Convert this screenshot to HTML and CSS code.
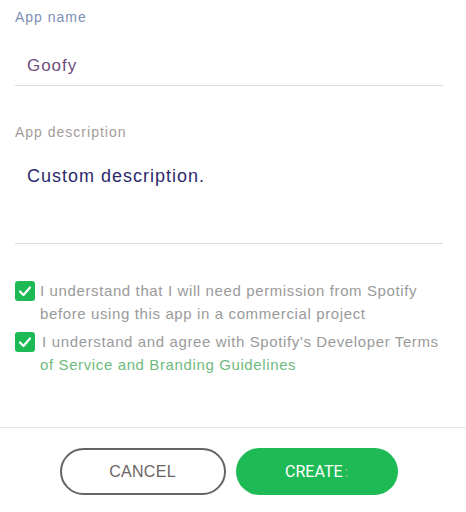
FILE: index.html
```html
<!DOCTYPE html>
<html>
<head>
<meta charset="utf-8">
<link rel="stylesheet" href="styles.css">
</head>
<body>
<div class="form">
  <div class="field">
    <div class="label label-name">App name</div>
    <div class="input">Goofy</div>
  </div>
  <div class="field field-desc">
    <div class="label label-desc">App description</div>
    <div class="input textarea">Custom description.</div>
  </div>
  <div class="checks">
    <div class="check">
      <span class="box"><svg width="20" height="20" viewBox="0 0 20 20"><path d="M5 10.5 L8.5 14 L15 6.5" fill="none" stroke="#fff" stroke-width="2.2" stroke-linecap="round" stroke-linejoin="round"/></svg></span>
      <span class="text">I understand that I will need permission from Spotify before using this app in a commercial project</span>
    </div>
    <div class="check">
      <span class="box"><svg width="20" height="20" viewBox="0 0 20 20"><path d="M5 10.5 L8.5 14 L15 6.5" fill="none" stroke="#fff" stroke-width="2.2" stroke-linecap="round" stroke-linejoin="round"/></svg></span>
      <span class="text"><span class="lead">I</span>understand and agree with Spotify's Developer Terms <span class="link">of Service and Branding Guidelines</span></span>
    </div>
  </div>
</div>
<div class="footer">
  <button class="btn cancel">CANCEL</button>
  <button class="btn create">CREATE<span class="caret">:</span></button>
</div>
</body>
</html>
```
FILE: styles.css
```css
html, body {
  margin: 0;
  padding: 0;
  background: #fff;
  font-family: "Liberation Sans", Arial, sans-serif;
}
.form {
  width: 428px;
  margin-left: 15px;
  padding-top: 8px;
}
.label {
  font-size: 14px;
  line-height: 18px;
  letter-spacing: 1px;
}
.label-name { color: #7d8fb6; }
.label-desc { color: #a59c98; }
.input {
  margin-top: 30px;
  padding-left: 12px;
  padding-bottom: 9px;
  font-size: 17px;
  line-height: 20px;
  letter-spacing: 0.95px;
  color: #6d4c7c;
  border-bottom: 1px solid #dcdcdc;
}
.field-desc {
  margin-top: 37px;
}
.textarea {
  margin-top: 25px;
  font-size: 18px;
  letter-spacing: 1px;
  color: #2b2a6c;
  padding-bottom: 57px;
}
.checks {
  margin-top: 35px;
  display: flex;
  flex-direction: column;
  gap: 5px;
}
.check {
  display: flex;
  align-items: flex-start;
  gap: 5px;
}
.box {
  flex: none;
  width: 20px;
  height: 20px;
  margin-top: 2px;
  border-radius: 3px;
  background: #1db954;
  display: flex;
}
.text {
  font-size: 15px;
  line-height: 23px;
  letter-spacing: 0.62px;
  color: #9a9a9a;
}
.lead {
  margin-left: 2px;
  margin-right: 5px;
}
.link {
  color: #6ebb7d;
}
.footer {
  margin-top: 51px;
  border-top: 1px solid #e6e6e6;
  padding-top: 20px;
  display: flex;
  justify-content: center;
  gap: 10px;
  padding-right: 9px;
}
.btn {
  height: 47px;
  border-radius: 24px;
  font-size: 16px;
  cursor: pointer;
  padding: 0;
}
.cancel {
  width: 166px;
  background: #fff;
  border: 2px solid #646468;
  color: #6b6464;
  font-family: "Liberation Sans", Arial, sans-serif;
  letter-spacing: 0.3px;
}
.create {
  width: 162px;
  background: #1eba55;
  border: none;
  color: #fff;
  font-family: Roboto, "Liberation Sans", sans-serif;
}
.caret {
  color: #c9c27a;
  margin-left: 2px;
  font-size: 14px;
}
```
